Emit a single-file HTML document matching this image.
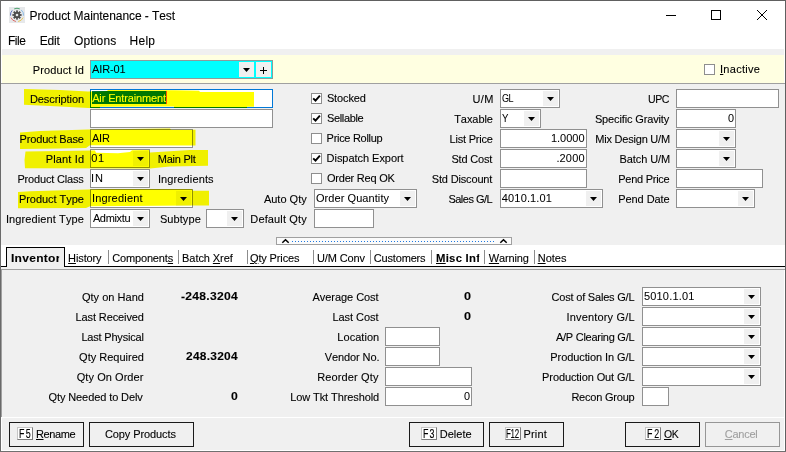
<!DOCTYPE html>
<html lang="en"><head><meta charset="utf-8"><title>Product Maintenance - Test</title>
<style>
html,body{margin:0;padding:0}
body{width:786px;height:452px;overflow:hidden;position:relative;background:#fff;font-family:"Liberation Sans",sans-serif;color:#000}
#w{position:absolute;left:0;top:0;width:786px;height:452px;overflow:hidden}
#w div,#w span,#w svg{box-sizing:content-box}
.t{position:absolute;white-space:nowrap;display:block;transform-origin:0 0;font-kerning:none;-webkit-text-stroke:0.1px currentColor}
.t u{text-decoration:underline;text-underline-offset:1px}
.f{position:absolute;border:1px solid #7a7a7a;background:#fff}
.db{position:absolute;width:15px;height:15px;background:#f0f0f0}
.ar{position:absolute;width:7px;height:4px;background:#000;clip-path:polygon(0 0,100% 0,50% 100%)}
.cb{position:absolute;width:9px;height:9px;border:1px solid #8e8e8e;background:#fff}
.cb svg{position:absolute;left:0;top:0}
.btn{position:absolute;height:23px;border:1px solid #1a1a1a;background:#f0f0f0}
.fk{position:absolute;height:11px;background:#fff;border:1px solid #c6c6c6;border-right-color:#7c7c7c;border-bottom-color:#7c7c7c}
.r{position:absolute}
</style></head>
<body><div id="w">
<div class="r" style="left:0px;top:0px;width:786px;height:452px;background:#ffffff"></div>
<div class="r" style="left:2px;top:49px;width:782px;height:6px;background:#f0f0f0"></div>
<div class="r" style="left:2px;top:55px;width:782px;height:28px;background:#ffffe1"></div>
<div class="r" style="left:1px;top:83px;width:784px;height:1px;background:#a0a0a0"></div>
<div class="r" style="left:1px;top:84px;width:784px;height:161px;background:#f0f0f0"></div>
<div class="r" style="left:1px;top:245px;width:784px;height:21px;background:#ffffff"></div>
<div class="r" style="left:1px;top:266px;width:784px;height:4px;background:#f0f0f0"></div>
<div class="r" style="left:1px;top:266px;width:784px;height:1px;background:#000000"></div>
<div class="r" style="left:1px;top:269px;width:784px;height:1px;background:#a0a0a0"></div>
<div class="r" style="left:6px;top:247px;width:59px;height:20px;background:#000"></div>
<div class="r" style="left:7px;top:248px;width:57px;height:19px;background:#f0f0f0"></div>
<div class="r" style="left:1px;top:270px;width:784px;height:147px;background:#f0f0f0"></div>
<div class="r" style="left:1px;top:270px;width:1px;height:147px;background:#a0a0a0"></div>
<div class="r" style="left:784px;top:270px;width:1px;height:148px;background:#ffffff"></div>
<div class="r" style="left:1px;top:417px;width:784px;height:1px;background:#ffffff"></div>
<div class="r" style="left:2px;top:418px;width:782px;height:32px;background:#f0f0f0"></div>
<div class="r" style="left:276px;top:237px;width:234px;height:6px;background:#fbfbfb;border:1px solid #a0a0a0"></div>
<svg class="r" style="left:276px;top:237px" width="236" height="9" viewBox="0 0 236 9"><g fill="#1e78e0"><rect x="16" y="4" width="1" height="1"/><rect x="19" y="4" width="1" height="1"/><rect x="22" y="4" width="1" height="1"/><rect x="25" y="4" width="1" height="1"/><rect x="28" y="4" width="1" height="1"/><rect x="31" y="4" width="1" height="1"/><rect x="34" y="4" width="1" height="1"/><rect x="37" y="4" width="1" height="1"/><rect x="40" y="4" width="1" height="1"/><rect x="43" y="4" width="1" height="1"/><rect x="46" y="4" width="1" height="1"/><rect x="49" y="4" width="1" height="1"/><rect x="52" y="4" width="1" height="1"/><rect x="55" y="4" width="1" height="1"/><rect x="58" y="4" width="1" height="1"/><rect x="61" y="4" width="1" height="1"/><rect x="64" y="4" width="1" height="1"/><rect x="67" y="4" width="1" height="1"/><rect x="70" y="4" width="1" height="1"/><rect x="73" y="4" width="1" height="1"/><rect x="76" y="4" width="1" height="1"/><rect x="79" y="4" width="1" height="1"/><rect x="82" y="4" width="1" height="1"/><rect x="85" y="4" width="1" height="1"/><rect x="88" y="4" width="1" height="1"/><rect x="91" y="4" width="1" height="1"/><rect x="94" y="4" width="1" height="1"/><rect x="97" y="4" width="1" height="1"/><rect x="100" y="4" width="1" height="1"/><rect x="103" y="4" width="1" height="1"/><rect x="106" y="4" width="1" height="1"/><rect x="109" y="4" width="1" height="1"/><rect x="112" y="4" width="1" height="1"/><rect x="115" y="4" width="1" height="1"/><rect x="118" y="4" width="1" height="1"/><rect x="121" y="4" width="1" height="1"/><rect x="124" y="4" width="1" height="1"/><rect x="127" y="4" width="1" height="1"/><rect x="130" y="4" width="1" height="1"/><rect x="133" y="4" width="1" height="1"/><rect x="136" y="4" width="1" height="1"/><rect x="139" y="4" width="1" height="1"/><rect x="142" y="4" width="1" height="1"/><rect x="145" y="4" width="1" height="1"/><rect x="148" y="4" width="1" height="1"/><rect x="151" y="4" width="1" height="1"/><rect x="154" y="4" width="1" height="1"/><rect x="157" y="4" width="1" height="1"/><rect x="160" y="4" width="1" height="1"/><rect x="163" y="4" width="1" height="1"/><rect x="166" y="4" width="1" height="1"/><rect x="169" y="4" width="1" height="1"/><rect x="172" y="4" width="1" height="1"/><rect x="175" y="4" width="1" height="1"/><rect x="178" y="4" width="1" height="1"/><rect x="181" y="4" width="1" height="1"/><rect x="184" y="4" width="1" height="1"/><rect x="187" y="4" width="1" height="1"/><rect x="190" y="4" width="1" height="1"/><rect x="193" y="4" width="1" height="1"/><rect x="196" y="4" width="1" height="1"/><rect x="199" y="4" width="1" height="1"/><rect x="202" y="4" width="1" height="1"/><rect x="205" y="4" width="1" height="1"/><rect x="208" y="4" width="1" height="1"/><rect x="211" y="4" width="1" height="1"/><rect x="214" y="4" width="1" height="1"/><rect x="217" y="4" width="1" height="1"/></g><path d="M6.3 5.8 L9.5 2.7 L12.7 5.8" fill="none" stroke="#000" stroke-width="1.5"/><path d="M224.3 5.8 L227.5 2.7 L230.7 5.8" fill="none" stroke="#000" stroke-width="1.5"/></svg>
<svg class="r" style="left:660px;top:5px" width="115" height="22" viewBox="0 0 115 22" fill="none" stroke="#000" stroke-width="1"><path d="M6 10.5 H16"/><rect x="51.5" y="5.5" width="9" height="9"/><path d="M97 5 L107 15 M107 5 L97 15"/></svg>
<svg style="position:absolute;left:9px;top:7px" width="16" height="16" viewBox="0 0 16 16">
<rect width="16" height="16" fill="#e6e8ea"/>
<g fill="none" stroke-width="1" opacity="0.9">
<path d="M5.2 1.9 A6.6 6.6 0 0 1 10.8 1.9" stroke="#3f9a62"/>
<path d="M12.2 2.9 A6.6 6.6 0 0 1 14.5 8.6" stroke="#7fb6e6"/>
<path d="M14.1 10.6 A6.6 6.6 0 0 1 9.1 14.5" stroke="#e8c24a"/>
<path d="M6.9 14.5 A6.6 6.6 0 0 1 1.9 10.6" stroke="#d9605a"/>
<path d="M1.5 8.6 A6.6 6.6 0 0 1 3.2 3.4" stroke="#4a63b8"/>
</g>
<g transform="translate(8 8)" fill="#4c4c4c">
<circle r="3.1"/>
<g id="tt"><rect x="-0.9" y="-4.6" width="1.8" height="9.2"/></g>
<rect x="-0.9" y="-4.6" width="1.8" height="9.2" transform="rotate(45)"/>
<rect x="-0.9" y="-4.6" width="1.8" height="9.2" transform="rotate(90)"/>
<rect x="-0.9" y="-4.6" width="1.8" height="9.2" transform="rotate(135)"/>
<circle r="1.3" fill="#e6e8ea"/>
</g></svg>
<div class="f" style="left:90px;top:60px;width:181px;height:17px;background:#00ffff;border-color:#8c9c9c"></div>
<div class="db" style="left:239px;top:62px"></div><div class="ar" style="left:243px;top:68px"></div>
<div class="db" style="left:256px;top:62px"></div>
<div style="position:absolute;left:260px;top:70px;width:7px;height:1px;background:#000"></div><div style="position:absolute;left:263px;top:67px;width:1px;height:7px;background:#000"></div>
<div class="cb" style="left:704px;top:64px"></div>
<div class="f" style="left:90px;top:89px;width:181px;height:17px;background:#fff;border-color:#0078d7"></div>
<div style="position:absolute;left:92px;top:91px;width:74px;height:13px;background:#0078d7"></div>
<div style="position:absolute;left:166px;top:91px;width:1px;height:13px;background:#f50"></div>
<div class="f" style="left:90px;top:109px;width:181px;height:17px;background:#fff;border-color:#909090"></div>
<div class="f" style="left:90px;top:129px;width:101px;height:17px;background:#fff;border-color:#909090"></div>
<div class="f" style="left:90px;top:149px;width:58px;height:17px;background:#fff;border-color:#909090"></div>
<div class="db" style="left:133px;top:151px"></div>
<div class="ar" style="left:137px;top:157px"></div>
<div class="f" style="left:90px;top:169px;width:58px;height:17px;background:#fff;border-color:#909090"></div>
<div class="db" style="left:133px;top:171px"></div>
<div class="ar" style="left:137px;top:177px"></div>
<div class="f" style="left:90px;top:189px;width:101px;height:17px;background:#fff;border-color:#909090"></div>
<div class="db" style="left:176px;top:191px"></div>
<div class="ar" style="left:180px;top:197px"></div>
<div class="f" style="left:90px;top:209px;width:58px;height:17px;background:#fff;border-color:#909090"></div>
<div class="db" style="left:133px;top:211px"></div>
<div class="ar" style="left:137px;top:217px"></div>
<div class="f" style="left:206px;top:209px;width:36px;height:17px;background:#fff;border-color:#909090"></div>
<div class="db" style="left:227px;top:211px"></div>
<div class="ar" style="left:231px;top:217px"></div>
<div class="cb" style="left:311px;top:93px"><svg width="9" height="9" viewBox="0 0 9 9"><path d="M1.2 4.3 L3.5 6.7 L7.9 1.6" fill="none" stroke="#000" stroke-width="1.9"/></svg></div>
<div class="cb" style="left:311px;top:113px"><svg width="9" height="9" viewBox="0 0 9 9"><path d="M1.2 4.3 L3.5 6.7 L7.9 1.6" fill="none" stroke="#000" stroke-width="1.9"/></svg></div>
<div class="cb" style="left:311px;top:133px"></div>
<div class="cb" style="left:311px;top:153px"><svg width="9" height="9" viewBox="0 0 9 9"><path d="M1.2 4.3 L3.5 6.7 L7.9 1.6" fill="none" stroke="#000" stroke-width="1.9"/></svg></div>
<div class="cb" style="left:311px;top:173px"></div>
<div class="f" style="left:314px;top:189px;width:101px;height:17px;background:#fff;border-color:#909090"></div>
<div class="db" style="left:400px;top:191px"></div>
<div class="ar" style="left:404px;top:197px"></div>
<div class="f" style="left:314px;top:209px;width:58px;height:17px;background:#fff;border-color:#909090"></div>
<div class="f" style="left:500px;top:89px;width:58px;height:17px;background:#fff;border-color:#909090"></div>
<div class="db" style="left:543px;top:91px"></div>
<div class="ar" style="left:547px;top:97px"></div>
<div class="f" style="left:500px;top:109px;width:39px;height:17px;background:#fff;border-color:#909090"></div>
<div class="db" style="left:524px;top:111px"></div>
<div class="ar" style="left:528px;top:117px"></div>
<div class="f" style="left:500px;top:129px;width:85px;height:17px;background:#fff;border-color:#909090"></div>
<div class="f" style="left:500px;top:149px;width:85px;height:17px;background:#fff;border-color:#909090"></div>
<div class="f" style="left:500px;top:169px;width:85px;height:17px;background:#fff;border-color:#909090"></div>
<div class="f" style="left:500px;top:189px;width:101px;height:17px;background:#fff;border-color:#909090"></div>
<div class="db" style="left:586px;top:191px"></div>
<div class="ar" style="left:590px;top:197px"></div>
<div class="f" style="left:676px;top:89px;width:101px;height:17px;background:#fff;border-color:#909090"></div>
<div class="f" style="left:676px;top:109px;width:58px;height:17px;background:#fff;border-color:#909090"></div>
<div class="f" style="left:676px;top:129px;width:58px;height:17px;background:#fff;border-color:#909090"></div>
<div class="db" style="left:719px;top:131px"></div>
<div class="ar" style="left:723px;top:137px"></div>
<div class="f" style="left:676px;top:149px;width:58px;height:17px;background:#fff;border-color:#909090"></div>
<div class="db" style="left:719px;top:151px"></div>
<div class="ar" style="left:723px;top:157px"></div>
<div class="f" style="left:676px;top:169px;width:85px;height:17px;background:#fff;border-color:#909090"></div>
<div class="f" style="left:676px;top:189px;width:77px;height:17px;background:#fff;border-color:#909090"></div>
<div class="db" style="left:738px;top:191px"></div>
<div class="ar" style="left:742px;top:197px"></div>
<div class="f" style="left:385px;top:327px;width:53px;height:17px;background:#fff;border-color:#909090"></div>
<div class="f" style="left:385px;top:347px;width:53px;height:17px;background:#fff;border-color:#909090"></div>
<div class="f" style="left:385px;top:367px;width:85px;height:17px;background:#fff;border-color:#909090"></div>
<div class="f" style="left:385px;top:387px;width:85px;height:17px;background:#fff;border-color:#909090"></div>
<div class="f" style="left:642px;top:287px;width:117px;height:17px;background:#fff;border-color:#909090"></div>
<div class="db" style="left:744px;top:289px"></div>
<div class="ar" style="left:748px;top:295px"></div>
<div class="f" style="left:642px;top:307px;width:117px;height:17px;background:#fff;border-color:#909090"></div>
<div class="db" style="left:744px;top:309px"></div>
<div class="ar" style="left:748px;top:315px"></div>
<div class="f" style="left:642px;top:327px;width:117px;height:17px;background:#fff;border-color:#909090"></div>
<div class="db" style="left:744px;top:329px"></div>
<div class="ar" style="left:748px;top:335px"></div>
<div class="f" style="left:642px;top:347px;width:117px;height:17px;background:#fff;border-color:#909090"></div>
<div class="db" style="left:744px;top:349px"></div>
<div class="ar" style="left:748px;top:355px"></div>
<div class="f" style="left:642px;top:367px;width:117px;height:17px;background:#fff;border-color:#909090"></div>
<div class="db" style="left:744px;top:369px"></div>
<div class="ar" style="left:748px;top:375px"></div>
<div class="f" style="left:642px;top:387px;width:25px;height:17px;background:#fff;border-color:#909090"></div>
<div class="btn" style="left:9px;top:422px;width:73px;border-color:#1a1a1a"></div>
<div class="fk" style="left:17px;top:427px;width:14px"></div>
<div class="btn" style="left:89px;top:422px;width:103px;border-color:#1a1a1a"></div>
<div class="btn" style="left:409px;top:422px;width:73px;border-color:#1a1a1a"></div>
<div class="fk" style="left:421px;top:427px;width:14px"></div>
<div class="btn" style="left:489px;top:422px;width:73px;border-color:#1a1a1a"></div>
<div class="fk" style="left:505px;top:427px;width:14px"></div>
<div class="btn" style="left:625px;top:422px;width:73px;border-color:#1a1a1a"></div>
<div class="fk" style="left:645px;top:427px;width:14px"></div>
<div class="btn" style="left:705px;top:422px;width:73px;border-color:#969696"></div>
<div style="position:absolute;left:108px;top:250px;width:1px;height:14px;background:#8c8c8c"></div>
<div style="position:absolute;left:178px;top:250px;width:1px;height:14px;background:#8c8c8c"></div>
<div style="position:absolute;left:247px;top:250px;width:1px;height:14px;background:#8c8c8c"></div>
<div style="position:absolute;left:313px;top:250px;width:1px;height:14px;background:#8c8c8c"></div>
<div style="position:absolute;left:370px;top:250px;width:1px;height:14px;background:#8c8c8c"></div>
<div style="position:absolute;left:431px;top:250px;width:1px;height:14px;background:#8c8c8c"></div>
<div style="position:absolute;left:484px;top:250px;width:1px;height:14px;background:#8c8c8c"></div>
<div style="position:absolute;left:534px;top:250px;width:1px;height:14px;background:#8c8c8c"></div>
<span class="t" style="left:29.52px;top:9.00px;font-size:12px;line-height:14px;letter-spacing:-0.073px;">Product Maintenance - Test</span>
<span class="t" style="left:7.92px;top:34.00px;font-size:12px;line-height:14px;letter-spacing:-0.439px;">File</span>
<span class="t" style="left:39.72px;top:34.00px;font-size:12px;line-height:14px;letter-spacing:-0.168px;">Edit</span>
<span class="t" style="left:74.03px;top:34.00px;font-size:12px;line-height:14px;letter-spacing:0.141px;">Options</span>
<span class="t" style="left:129.52px;top:34.00px;font-size:12px;line-height:14px;letter-spacing:0.270px;">Help</span>
<span class="t" style="left:32.80px;top:64.00px;font-size:11px;line-height:12px;letter-spacing:0.108px;">Product Id</span>
<span class="t" style="left:91.98px;top:63.00px;font-size:11px;line-height:12px;letter-spacing:-0.095px;-webkit-text-stroke:0.05px currentColor;">AIR-01</span>
<span class="t" style="left:719.98px;top:63.00px;font-size:11px;line-height:12px;letter-spacing:0.299px;"><u>I</u>nactive</span>
<span class="t" style="left:29.90px;top:93.00px;font-size:11px;line-height:12px;letter-spacing:-0.080px;">Description</span>
<span class="t" style="left:92.18px;top:92.00px;font-size:11px;line-height:12px;letter-spacing:-0.136px;color:#fff;">Air Entrainment</span>
<span class="t" style="left:19.50px;top:133.00px;font-size:11px;line-height:12px;letter-spacing:-0.150px;">Product Base</span>
<span class="t" style="left:91.98px;top:132.00px;font-size:11px;line-height:12px;letter-spacing:-0.203px;-webkit-text-stroke:0.05px currentColor;">AIR</span>
<span class="t" style="left:45.70px;top:153.00px;font-size:11px;line-height:12px;letter-spacing:0.158px;">Plant Id</span>
<span class="t" style="left:91.37px;top:152.00px;font-size:11px;line-height:12px;letter-spacing:0.631px;-webkit-text-stroke:0.05px currentColor;">01</span>
<span class="t" style="left:157.80px;top:153.00px;font-size:11px;line-height:12px;letter-spacing:-0.236px;">Main Plt</span>
<span class="t" style="left:17.40px;top:173.00px;font-size:11px;line-height:12px;letter-spacing:-0.173px;">Product Class</span>
<span class="t" style="left:90.98px;top:172.00px;font-size:11px;line-height:12px;letter-spacing:0.900px;transform:scaleX(1.0012);-webkit-text-stroke:0.05px currentColor;">IN</span>
<span class="t" style="left:157.88px;top:173.00px;font-size:11px;line-height:12px;letter-spacing:0.129px;">Ingredients</span>
<span class="t" style="left:18.90px;top:193.00px;font-size:11px;line-height:12px;letter-spacing:-0.039px;">Product Type</span>
<span class="t" style="left:91.88px;top:192.00px;font-size:11px;line-height:12px;letter-spacing:0.197px;-webkit-text-stroke:0.05px currentColor;">Ingredient</span>
<span class="t" style="left:5.88px;top:213.00px;font-size:11px;line-height:12px;letter-spacing:0.112px;">Ingredient Type</span>
<span class="t" style="left:92.88px;top:212.00px;font-size:11px;line-height:12px;letter-spacing:-0.347px;-webkit-text-stroke:0.05px currentColor;">Admixtu</span>
<span class="t" style="left:159.90px;top:213.00px;font-size:11px;line-height:12px;letter-spacing:0.087px;">Subtype</span>
<span class="t" style="left:326.90px;top:92.00px;font-size:11px;line-height:12px;letter-spacing:-0.123px;">Stocked</span>
<span class="t" style="left:326.90px;top:112.00px;font-size:11px;line-height:12px;letter-spacing:-0.336px;">Sellable</span>
<span class="t" style="left:326.60px;top:132.00px;font-size:11px;line-height:12px;letter-spacing:-0.294px;">Price Rollup</span>
<span class="t" style="left:326.60px;top:152.00px;font-size:11px;line-height:12px;letter-spacing:-0.040px;">Dispatch Export</span>
<span class="t" style="left:326.98px;top:172.00px;font-size:11px;line-height:12px;letter-spacing:-0.223px;">Order Req OK</span>
<span class="t" style="left:263.88px;top:193.00px;font-size:11px;line-height:12px;letter-spacing:0.007px;">Auto Qty</span>
<span class="t" style="left:315.98px;top:192.00px;font-size:11px;line-height:12px;letter-spacing:0.069px;-webkit-text-stroke:0.05px currentColor;">Order Quantity</span>
<span class="t" style="left:250.30px;top:213.00px;font-size:11px;line-height:12px;letter-spacing:0.140px;">Default Qty</span>
<span class="t" style="left:472.55px;top:93.00px;font-size:11px;line-height:12px;letter-spacing:0.344px;">U/M</span>
<span class="t" style="left:501.54px;top:92.00px;font-size:11px;line-height:12px;letter-spacing:-0.550px;transform:scaleX(0.8254);-webkit-text-stroke:0.05px currentColor;">GL</span>
<span class="t" style="left:454.15px;top:113.00px;font-size:11px;line-height:12px;letter-spacing:-0.050px;">Taxable</span>
<span class="t" style="left:501.79px;top:112.00px;font-size:11px;line-height:12px;transform:scaleX(0.8755);-webkit-text-stroke:0.05px currentColor;">Y</span>
<span class="t" style="left:449.60px;top:133.00px;font-size:11px;line-height:12px;letter-spacing:-0.227px;">List Price</span>
<span class="t" style="left:550.96px;top:132.00px;font-size:11px;line-height:12px;letter-spacing:-0.015px;-webkit-text-stroke:0.05px currentColor;">1.0000</span>
<span class="t" style="left:451.40px;top:153.00px;font-size:11px;line-height:12px;letter-spacing:-0.172px;">Std Cost</span>
<span class="t" style="left:556.40px;top:152.00px;font-size:11px;line-height:12px;letter-spacing:0.152px;-webkit-text-stroke:0.05px currentColor;">.2000</span>
<span class="t" style="left:431.80px;top:173.00px;font-size:11px;line-height:12px;letter-spacing:-0.162px;">Std Discount</span>
<span class="t" style="left:448.40px;top:193.00px;font-size:11px;line-height:12px;letter-spacing:-0.505px;">Sales G/L</span>
<span class="t" style="left:501.85px;top:192.00px;font-size:11px;line-height:12px;letter-spacing:0.144px;-webkit-text-stroke:0.05px currentColor;">4010.1.01</span>
<span class="t" style="left:648.28px;top:93.00px;font-size:11px;line-height:12px;letter-spacing:-0.550px;transform:scaleX(0.9637);">UPC</span>
<span class="t" style="left:594.90px;top:113.00px;font-size:11px;line-height:12px;letter-spacing:-0.139px;">Specific Gravity</span>
<span class="t" style="left:727.58px;top:112.00px;font-size:11px;line-height:12px;transform:scaleX(0.9889);-webkit-text-stroke:0.05px currentColor;">0</span>
<span class="t" style="left:595.30px;top:133.00px;font-size:11px;line-height:12px;letter-spacing:-0.217px;">Mix Design U/M</span>
<span class="t" style="left:619.50px;top:153.00px;font-size:11px;line-height:12px;letter-spacing:-0.093px;">Batch U/M</span>
<span class="t" style="left:618.20px;top:173.00px;font-size:11px;line-height:12px;letter-spacing:-0.257px;">Pend Price</span>
<span class="t" style="left:618.20px;top:193.00px;font-size:11px;line-height:12px;letter-spacing:-0.061px;">Pend Date</span>
<span class="t" style="left:10.59px;top:252.00px;font-size:11px;line-height:12px;letter-spacing:0.250px;transform:scaleX(1.0940);font-weight:bold;width:44.25px;overflow:hidden;">Inventor</span>
<span class="t" style="left:68.10px;top:252.00px;font-size:11px;line-height:12px;letter-spacing:-0.117px;"><u>H</u>istory</span>
<span class="t" style="left:112.24px;top:252.00px;font-size:11px;line-height:12px;letter-spacing:-0.157px;">Component<u>s</u></span>
<span class="t" style="left:182.10px;top:252.00px;font-size:11px;line-height:12px;letter-spacing:-0.075px;">Batch <u>X</u>ref</span>
<span class="t" style="left:249.98px;top:252.00px;font-size:11px;line-height:12px;letter-spacing:-0.135px;"><u>Q</u>ty Prices</span>
<span class="t" style="left:317.05px;top:252.00px;font-size:11px;line-height:12px;letter-spacing:-0.145px;">U/M Conv</span>
<span class="t" style="left:373.84px;top:252.00px;font-size:11px;line-height:12px;letter-spacing:-0.178px;">Customers</span>
<span class="t" style="left:435.64px;top:252.00px;font-size:11px;line-height:12px;letter-spacing:0.250px;transform:scaleX(1.0288);font-weight:bold;width:41.95px;overflow:hidden;"><u>M</u>isc Info</span>
<span class="t" style="left:488.85px;top:252.00px;font-size:11px;line-height:12px;letter-spacing:-0.150px;"><u>W</u>arning</span>
<span class="t" style="left:537.70px;top:252.00px;font-size:11px;line-height:12px;letter-spacing:-0.009px;"><u>N</u>otes</span>
<span class="t" style="left:81.88px;top:291.00px;font-size:11px;line-height:12px;letter-spacing:0.027px;">Qty on Hand</span>
<span class="t" style="left:75.50px;top:311.00px;font-size:11px;line-height:12px;letter-spacing:-0.108px;">Last Received</span>
<span class="t" style="left:81.40px;top:331.00px;font-size:11px;line-height:12px;letter-spacing:-0.189px;">Last Physical</span>
<span class="t" style="left:79.08px;top:351.00px;font-size:11px;line-height:12px;letter-spacing:0.002px;">Qty Required</span>
<span class="t" style="left:76.78px;top:371.00px;font-size:11px;line-height:12px;letter-spacing:0.053px;">Qty On Order</span>
<span class="t" style="left:48.48px;top:391.00px;font-size:11px;line-height:12px;letter-spacing:-0.096px;">Qty Needed to Delv</span>
<span class="t" style="left:181.03px;top:290.00px;font-size:11px;line-height:12px;letter-spacing:0.250px;transform:scaleX(1.1008);font-weight:bold;">-248.3204</span>
<span class="t" style="left:186.09px;top:350.00px;font-size:11px;line-height:12px;letter-spacing:0.250px;transform:scaleX(1.0829);font-weight:bold;">248.3204</span>
<span class="t" style="left:231.32px;top:390.00px;font-size:11px;line-height:12px;transform:scaleX(1.1087);font-weight:bold;">0</span>
<span class="t" style="left:312.58px;top:291.00px;font-size:11px;line-height:12px;letter-spacing:-0.058px;">Average Cost</span>
<span class="t" style="left:332.40px;top:311.00px;font-size:11px;line-height:12px;letter-spacing:-0.035px;">Last Cost</span>
<span class="t" style="left:337.30px;top:331.00px;font-size:11px;line-height:12px;letter-spacing:0.047px;">Location</span>
<span class="t" style="left:324.65px;top:351.00px;font-size:11px;line-height:12px;letter-spacing:-0.088px;">Vendor No.</span>
<span class="t" style="left:317.20px;top:371.00px;font-size:11px;line-height:12px;letter-spacing:0.141px;">Reorder Qty</span>
<span class="t" style="left:290.20px;top:391.00px;font-size:11px;line-height:12px;letter-spacing:-0.092px;">Low Tkt Threshold</span>
<span class="t" style="left:464.30px;top:290.00px;font-size:11px;line-height:12px;transform:scaleX(1.1469);font-weight:bold;">0</span>
<span class="t" style="left:464.30px;top:310.00px;font-size:11px;line-height:12px;transform:scaleX(1.1469);font-weight:bold;">0</span>
<span class="t" style="left:463.88px;top:390.00px;font-size:11px;line-height:12px;transform:scaleX(0.9889);-webkit-text-stroke:0.05px currentColor;">0</span>
<span class="t" style="left:551.54px;top:291.00px;font-size:11px;line-height:12px;letter-spacing:-0.199px;">Cost of Sales G/L</span>
<span class="t" style="left:643.96px;top:290.00px;font-size:11px;line-height:12px;letter-spacing:0.180px;-webkit-text-stroke:0.05px currentColor;">5010.1.01</span>
<span class="t" style="left:566.48px;top:311.00px;font-size:11px;line-height:12px;letter-spacing:0.171px;">Inventory G/L</span>
<span class="t" style="left:555.98px;top:331.00px;font-size:11px;line-height:12px;letter-spacing:-0.263px;">A/P Clearing G/L</span>
<span class="t" style="left:550.30px;top:351.00px;font-size:11px;line-height:12px;letter-spacing:-0.084px;">Production In G/L</span>
<span class="t" style="left:542.10px;top:371.00px;font-size:11px;line-height:12px;letter-spacing:-0.100px;">Production Out G/L</span>
<span class="t" style="left:571.40px;top:391.00px;font-size:11px;line-height:12px;letter-spacing:-0.216px;">Recon Group</span>
<span class="t" style="left:19.07px;top:427.00px;font-size:12px;line-height:14px;letter-spacing:1.674px;transform:scaleX(0.7400);-webkit-text-stroke:0.15px #000;">F5</span>
<span class="t" style="left:36.00px;top:428.00px;font-size:11px;line-height:12px;letter-spacing:-0.417px;"><u>R</u>ename</span>
<span class="t" style="left:104.94px;top:428.00px;font-size:11px;line-height:12px;letter-spacing:-0.099px;">Copy Products</span>
<span class="t" style="left:423.07px;top:427.00px;font-size:12px;line-height:14px;letter-spacing:1.427px;transform:scaleX(0.7400);-webkit-text-stroke:0.15px #000;">F3</span>
<span class="t" style="left:439.70px;top:428.00px;font-size:11px;line-height:12px;letter-spacing:0.019px;">Delete</span>
<span class="t" style="left:506.25px;top:427.00px;font-size:12px;line-height:14px;letter-spacing:-0.454px;transform:scaleX(0.6600);-webkit-text-stroke:0.15px #000;">F12</span>
<span class="t" style="left:523.40px;top:428.00px;font-size:11px;line-height:12px;letter-spacing:0.191px;">Print</span>
<span class="t" style="left:646.87px;top:427.00px;font-size:12px;line-height:14px;letter-spacing:2.584px;transform:scaleX(0.7400);-webkit-text-stroke:0.15px #000;">F2</span>
<span class="t" style="left:664.40px;top:428.00px;font-size:11px;line-height:12px;letter-spacing:-0.550px;transform:scaleX(0.9525);"><u>O</u>K</span>
<span class="t" style="left:724.84px;top:428.00px;font-size:11px;line-height:12px;letter-spacing:-0.269px;color:#a0a0a0;"><u>C</u>ancel</span>
<svg style="position:absolute;left:0;top:0;mix-blend-mode:multiply" width="786" height="452" viewBox="0 0 786 452">
<g fill="#ffff00">
<path d="M24 89 L60 90 L88 91.5 L107 91 L108 90 L175 90.2 L199 90.8 L200 92 L254 92 L254 106.8 L247 106.8 L247 108 L174 108 L174 106.6 L100 106.8 L100 108.3 L88 108 L60 106.4 L24 104.8 Z"/>
<path d="M20 132.5 L40 131 L88 129.6 L150 128.8 L170 128.6 L171 129.8 L195.5 129.8 L195.5 145.5 L90 145.3 L86 148 L60 148.6 L20 149 Z"/>
<path d="M25.5 151.5 L60 151 L90 150.4 L95 150.4 L96 152.8 L118 153.2 L130 152 L132 150.3 L149 150 L150 152.4 L170 151.2 L190 150 L208 150 L208 165.8 L170 166.5 L150 168.4 L25 168.3 L24.5 160 Z"/>
<path d="M18 192 L30 191.2 L88 189.6 L100 189 L192 189 L193 190.7 L209 190.7 L209 205.4 L192 205.6 L90 206.3 L86 208 L18 208.3 Z"/>
</g></svg>
<div class="r" style="left:0px;top:0px;width:786px;height:1px;background:#606060"></div>
<div class="r" style="left:0px;top:0px;width:1px;height:452px;background:#6a6a6a"></div>
<div class="r" style="left:785px;top:0px;width:1px;height:452px;background:#606060"></div>
<div class="r" style="left:1px;top:450px;width:784px;height:1px;background:#ffffff"></div>
<div class="r" style="left:0px;top:451px;width:786px;height:1px;background:#707070"></div>
</div></body></html>
